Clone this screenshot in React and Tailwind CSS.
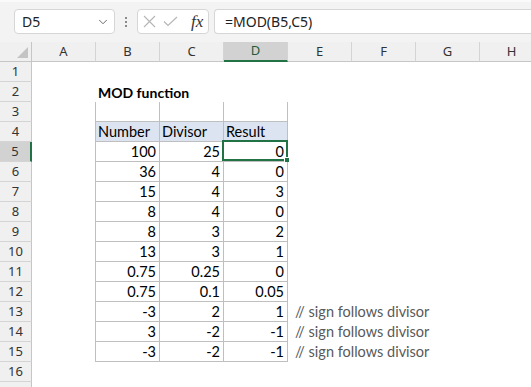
import { ChevronDown } from 'lucide-react';

const cols = ['A', 'B', 'C', 'D', 'E', 'F', 'G', 'H'];

// table rows: [number, divisor, result, note]
const data = [
  ['100', '25', '0'],
  ['36', '4', '0'],
  ['15', '4', '3'],
  ['8', '4', '0'],
  ['8', '3', '2'],
  ['13', '3', '1'],
  ['0.75', '0.25', '0'],
  ['0.75', '0.1', '0.05'],
  ['-3', '2', '1', '// sign follows divisor'],
  ['3', '-2', '-1', '// sign follows divisor'],
  ['-3', '-2', '-1', '// sign follows divisor'],
];

const uiFont = { fontFamily: '"Noto Sans", "Open Sans", sans-serif' };
const cellFont = { fontFamily: 'Lato, "Liberation Sans", sans-serif' };

const RowHeader = ({ n, active }) => (
  <div
    className={`w-[32px] h-[20px] shrink-0 flex items-center justify-center text-[13px] text-[#333] border-b border-[#d4d4d4] ${
      active ? 'bg-[#d2d2d2] border-r-2 border-r-[#217346] text-[#1e5c38]' : 'bg-[#f0f0f0] border-r border-r-[#c6c6c6]'
    }`}
    style={uiFont}
  >
    {n}
  </div>
);

const Cell = ({ children, className = '' }) => (
  <div className={`w-[64px] h-[20px] shrink-0 flex items-center ${className}`}>{children}</div>
);

export default function App() {
  const rows = [];
  for (let r = 1; r <= 17; r++) {
    let content = null;
    if (r === 2) {
      content = (
        <>
          <Cell />
          <Cell className="pl-[2px] text-[14px] font-bold text-black whitespace-nowrap overflow-visible">MOD function</Cell>
        </>
      );
    } else if (r === 3) {
      content = (
        <>
          <Cell className="border-r border-[#bfbfbf]" />
          <Cell className="border-r border-b border-[#bfbfbf]" />
          <Cell className="border-r border-b border-[#bfbfbf]" />
          <Cell className="border-r border-b border-[#bfbfbf]" />
        </>
      );
    } else if (r === 4) {
      content = (
        <>
          <Cell className="border-r border-[#bfbfbf]" />
          {['Number', 'Divisor', 'Result'].map((t) => (
            <Cell key={t} className="bg-[#dce4f2] border-r border-b border-[#bfbfbf] pl-[2px] text-black">
              {t}
            </Cell>
          ))}
        </>
      );
    } else if (r >= 5 && r <= 15) {
      const d = data[r - 5];
      content = (
        <>
          <Cell className="border-r border-[#bfbfbf]" />
          <Cell className="border-r border-b border-[#bfbfbf] justify-end pr-[3px]">{d[0]}</Cell>
          <Cell className="border-r border-b border-[#bfbfbf] justify-end pr-[3px]">{d[1]}</Cell>
          <Cell className="relative border-r border-b border-[#bfbfbf] justify-end pr-[3px]">
            {d[2]}
            {r === 5 && (
              <div className="absolute -left-[2px] -top-[2px] w-[66px] h-[21px] border-2 border-[#217346]">
                <div className="absolute -right-[4px] -bottom-[4px] w-[6px] h-[6px] bg-[#217346] border border-white" />
              </div>
            )}
          </Cell>
          {d[3] && <Cell className="pl-[7px] whitespace-nowrap text-[#595959]">{d[3]}</Cell>}
        </>
      );
    }
    rows.push(
      <div key={r} className="flex h-[20px]">
        <RowHeader n={r < 17 ? r : ''} active={r === 5} />
        {content}
      </div>
    );
  }

  return (
    <div className="w-[531px] h-[387px] overflow-hidden bg-white text-[14.5px] text-black" style={cellFont}>
      {/* formula bar */}
      <div className="h-[42px] bg-[#f3f3f3] border-t-2 border-[#fafafa] flex items-start pt-[7px]" style={uiFont}>
        <div className="ml-[14px] w-[101px] h-[25px] bg-white border border-[#d6d6d6] rounded-[4px] flex items-center justify-between pl-[7px] pr-[4px] text-[14px] text-[#222]">
          <span>D5</span>
          <ChevronDown className="w-[14px] h-[14px] text-[#555]" strokeWidth={1.5} />
        </div>
        <div className="w-[22px] h-[25px] flex flex-col items-center justify-center gap-[2px]">
          <span className="w-[2px] h-[2px] bg-[#8a8a8a]" />
          <span className="w-[2px] h-[2px] bg-[#8a8a8a]" />
          <span className="w-[2px] h-[2px] bg-[#8a8a8a]" />
        </div>
        <div className="w-[72px] h-[25px] bg-white border border-[#d6d6d6] rounded-[4px] flex items-center pl-[5px] gap-[7px]">
          <svg width="13" height="13" viewBox="0 0 13 13" fill="none" stroke="#b5b5b5" strokeWidth="1.1">
            <path d="M1 1L12 12M12 1L1 12" />
          </svg>
          <svg width="15" height="11" viewBox="0 0 15 11" fill="none" stroke="#b5b5b5" strokeWidth="1.1">
            <path d="M1 5.5L5 9.5L14 1" />
          </svg>
          <span className="ml-[6px] italic text-[17px] text-[#333]" style={{ fontFamily: '"Liberation Serif", serif' }}>
            fx
          </span>
        </div>
        <div className="ml-[5px] flex-1 h-[25px] bg-white border border-[#d6d6d6] border-r-0 rounded-l-[4px] flex items-center pl-[10px] text-[14px] text-[#222]">
          =MOD(B5,C5)
        </div>
      </div>

      {/* column headers */}
      <div className="flex h-[20px] bg-[#f0f0f0] text-[13px] text-[#333]" style={uiFont}>
        <div className="w-[32px] h-[20px] shrink-0 border-r border-b border-[#c6c6c6] relative">
          <svg className="absolute left-[17px] top-[5px]" width="11" height="11" viewBox="0 0 11 11">
            <path d="M11 0V11H0Z" fill="#c4c4c4" />
          </svg>
        </div>
        {cols.map((c) => (
          <div
            key={c}
            className={`w-[64px] h-[20px] shrink-0 flex items-center justify-center border-r border-[#d4d4d4] ${
              c === 'D' ? 'bg-[#d2d2d2] border-b-2 border-b-[#217346] text-[#1e5c38]' : 'border-b border-b-[#c6c6c6]'
            }`}
          >
            {c}
          </div>
        ))}
      </div>

      {rows}
    </div>
  );
}
